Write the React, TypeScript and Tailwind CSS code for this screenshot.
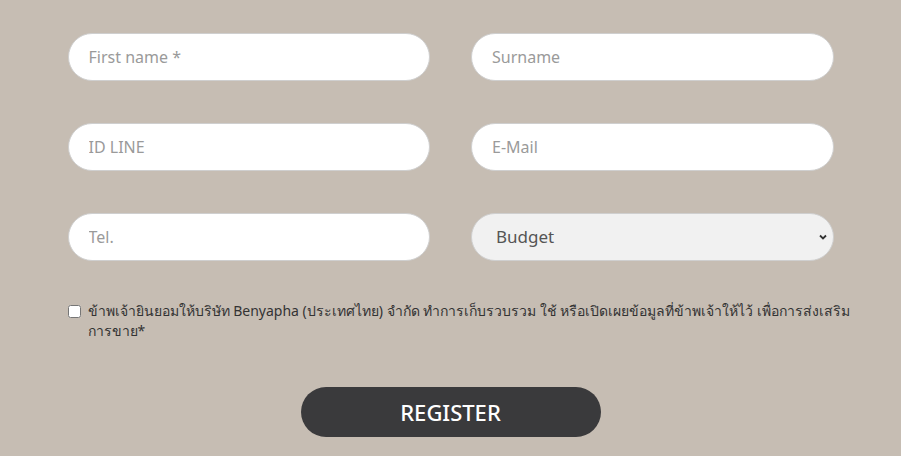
import React from "react";

const inputCls =
  "h-12 w-full rounded-full border border-[#cfcfcf] bg-white px-5 text-[16px] text-[#555] placeholder:text-[#9a9a9a] outline-none";

export default function App() {
  return (
    <div
      className="min-h-[456px] w-full bg-[#c6bdb3] pt-[33px]"
      style={{ fontFamily: '"Noto Sans", "Open Sans", sans-serif' }}
    >
      <form className="mx-auto w-[766px]">
        {/* Fields */}
        <div className="grid grid-cols-2 gap-x-[41px] gap-y-[42px]">
          <input className={inputCls} placeholder="First name *" />
          <input className={inputCls} placeholder="Surname" />
          <input className={inputCls} placeholder="ID LINE" />
          <input className={inputCls} placeholder="E-Mail" />
          <input className={inputCls} placeholder="Tel." />
          <div className="relative">
            <select className="h-12 w-full appearance-none rounded-full border border-[#cfcfcf] bg-[#f1f1f1] pl-6 pr-10 text-[17px] text-[#555] outline-none">
              <option>Budget</option>
            </select>
            <svg
              className="pointer-events-none absolute right-[6px] top-1/2 -translate-y-1/2"
              width="10"
              height="10"
              viewBox="0 0 10 10"
            >
              <path d="M2 3.5 L5 6.5 L8 3.5" fill="none" stroke="#333" strokeWidth="1.8" />
            </svg>
          </div>
        </div>

        {/* Consent */}
        <label className="mt-[40px] flex items-start gap-[7px] text-[14px] leading-5 text-[#333]">
          <input type="checkbox" className="mt-[4px] h-[13px] w-[13px] shrink-0 bg-white" />
          <span>
            <span className="whitespace-nowrap">
              ข้าพเจ้ายินยอมให้บริษัท Benyapha (ประเทศไทย) จำกัด ทำการเก็บรวบรวม ใช้ หรือเปิดเผยข้อมูลที่ข้าพเจ้าให้ไว้ เพื่อการส่งเสริม
            </span>
            <br />
            การขาย*
          </span>
        </label>

        {/* Submit */}
        <div className="mt-[46px] flex justify-center">
          <button
            type="button"
            className="h-[50px] w-[300px] rounded-full bg-[#3a3a3c] text-[22px] font-medium text-white"
          >
            REGISTER
          </button>
        </div>
      </form>
    </div>
  );
}
